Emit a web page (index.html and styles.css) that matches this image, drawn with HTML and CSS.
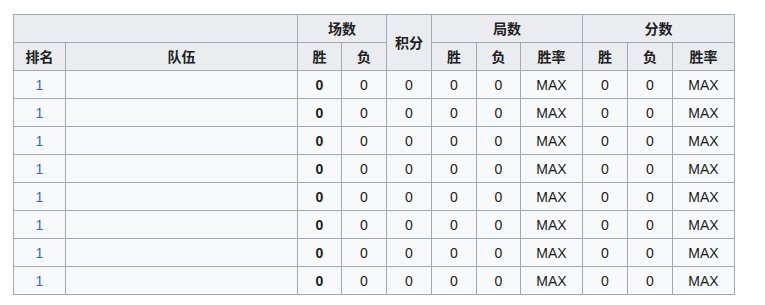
FILE: index.html
```html
<!DOCTYPE html>
<html lang="zh">
<head>
<meta charset="utf-8">
<link rel="stylesheet" href="styles.css">
</head>
<body>
<table class="wikitable">
  <colgroup>
    <col class="c-rank"><col class="c-team"><col class="c-n"><col class="c-n2"><col class="c-n2"><col class="c-n2"><col class="c-n"><col class="c-rate"><col class="c-n2"><col class="c-n2"><col class="c-rate">
  </colgroup>
  <thead>
    <tr class="hrow">
      <th colspan="2"></th>
      <th colspan="2">场数</th>
      <th rowspan="2">积分</th>
      <th colspan="3">局数</th>
      <th colspan="3">分数</th>
    </tr>
    <tr class="hrow">
      <th>排名</th>
      <th>队伍</th>
      <th>胜</th>
      <th>负</th>
      <th>胜</th>
      <th>负</th>
      <th>胜率</th>
      <th>胜</th>
      <th>负</th>
      <th>胜率</th>
    </tr>
  </thead>
  <tbody>
    <tr><td class="rank">1</td><td></td><td class="bold">0</td><td>0</td><td>0</td><td>0</td><td>0</td><td>MAX</td><td>0</td><td>0</td><td>MAX</td></tr>
    <tr><td class="rank">1</td><td></td><td class="bold">0</td><td>0</td><td>0</td><td>0</td><td>0</td><td>MAX</td><td>0</td><td>0</td><td>MAX</td></tr>
    <tr><td class="rank">1</td><td></td><td class="bold">0</td><td>0</td><td>0</td><td>0</td><td>0</td><td>MAX</td><td>0</td><td>0</td><td>MAX</td></tr>
    <tr><td class="rank">1</td><td></td><td class="bold">0</td><td>0</td><td>0</td><td>0</td><td>0</td><td>MAX</td><td>0</td><td>0</td><td>MAX</td></tr>
    <tr><td class="rank">1</td><td></td><td class="bold">0</td><td>0</td><td>0</td><td>0</td><td>0</td><td>MAX</td><td>0</td><td>0</td><td>MAX</td></tr>
    <tr><td class="rank">1</td><td></td><td class="bold">0</td><td>0</td><td>0</td><td>0</td><td>0</td><td>MAX</td><td>0</td><td>0</td><td>MAX</td></tr>
    <tr><td class="rank">1</td><td></td><td class="bold">0</td><td>0</td><td>0</td><td>0</td><td>0</td><td>MAX</td><td>0</td><td>0</td><td>MAX</td></tr>
    <tr><td class="rank">1</td><td></td><td class="bold">0</td><td>0</td><td>0</td><td>0</td><td>0</td><td>MAX</td><td>0</td><td>0</td><td>MAX</td></tr>
  </tbody>
</table>
</body>
</html>
```
FILE: styles.css
```css
html, body {
  margin: 0;
  background: #ffffff;
}
body {
  padding: 14px 0 0 13px;
  font-family: "Liberation Sans", Arial, "Noto Sans CJK SC", sans-serif;
  font-size: 14px;
  color: #202122;
}
.wikitable {
  border-collapse: collapse;
  table-layout: fixed;
  width: 722px;
  background: #f8f9fa;
  border: 1px solid #a2a9b1;
}
.c-rank { width: 52px; }
.c-team { width: 232px; }
.c-n { width: 44px; }
.c-n2 { width: 45px; }
.c-rate { width: 62px; }
.wikitable th,
.wikitable td {
  border: 1px solid #a2a9b1;
  padding: 0 4px;
  height: 27px;
  text-align: center;
  vertical-align: middle;
  line-height: 20px;
}
.wikitable th {
  background: #eaecf0;
  font-weight: bold;
}
.rank {
  color: #3366cc;
}
.bold {
  font-weight: bold;
}
```
